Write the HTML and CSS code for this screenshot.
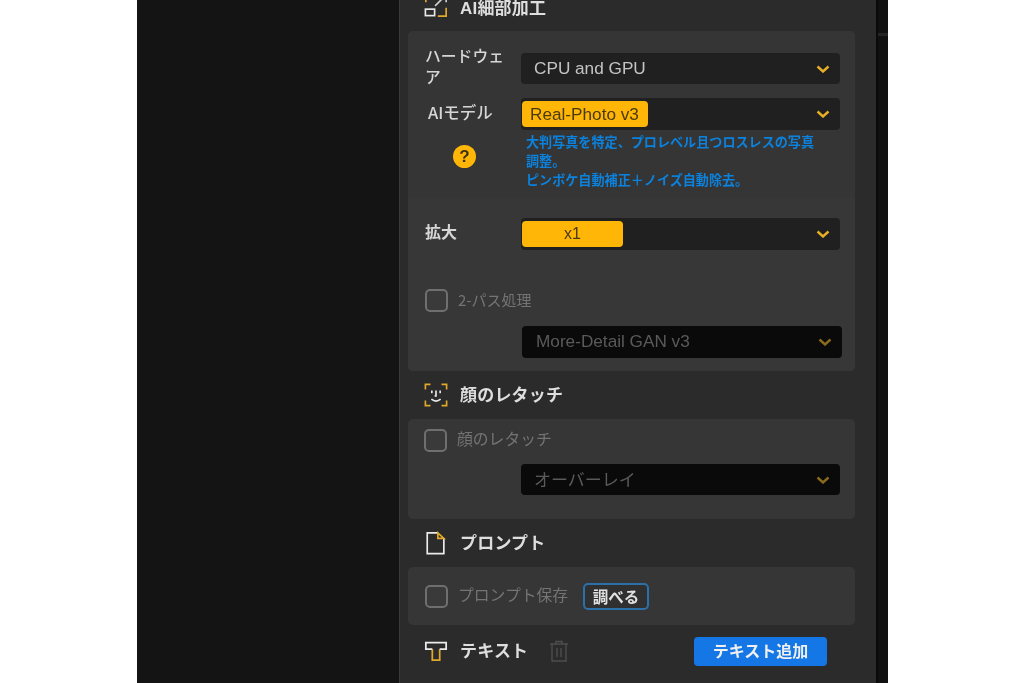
FILE: index.html
```html
<!DOCTYPE html>
<html lang="ja">
<head>
<meta charset="utf-8">
<title>AI細部加工</title>
<link rel="stylesheet" href="styles.css">
</head>
<body>
<div class="app">
  <div class="side"></div>
  <main class="panel">
    <header class="head head-first">
      <svg class="ico" viewBox="0 0 26 26" fill="none" stroke-width="1.8"><path d="M2 1v9" stroke="#e0a92a"/><path d="M24 16v9h-9" stroke="#e0a92a"/><rect x="1.5" y="17.500" width="10" height="7" stroke="#e8e8e8"/><path d="M12 14 23 3M16 2h8v8" stroke="#cfcfcf"/></svg>
      <span class="head-text">AI細部加工</span>
    </header>
    <section class="card card-main">
      <div class="block block-a">
        <div class="row row-first">
          <div class="label">ハードウェア</div>
          <div class="select"><span class="val">CPU and GPU</span><svg class="chev" viewBox="0 0 14 8"><path d="M1.500 1.500 7 6.500l5.500-5"/></svg></div>
        </div>
        <div class="row row-model">
          <div class="label label-c">AIモデル</div>
          <div class="select select-chip"><span class="chip chip-model">Real-Photo v3</span><svg class="chev" viewBox="0 0 14 8"><path d="M1.500 1.500 7 6.500l5.500-5"/></svg></div>
        </div>
        <div class="row row-help">
          <div class="help-cell"><span class="help">?</span></div>
          <p class="note">大判写真を特定、プロレベル且つロスレスの写真調整。<br>ピンボケ自動補正＋ノイズ自動除去。</p>
        </div>
      </div>
      <div class="block block-b">
        <div class="row">
          <div class="label label-scale">拡大</div>
          <div class="select select-chip"><span class="chip chip-scale">x1</span><svg class="chev" viewBox="0 0 14 8"><path d="M1.500 1.500 7 6.500l5.500-5"/></svg></div>
        </div>
        <label class="check check-pass"><span class="box"></span><span class="check-text small">2-パス処理</span></label>
        <div class="row row-dark">
          <div></div>
          <div class="select select-off wide"><span class="val val-detail">More-Detail GAN v3</span><svg class="chev" viewBox="0 0 14 8"><path d="M1.500 1.500 7 6.500l5.500-5"/></svg></div>
        </div>
      </div>
    </section>
    <header class="head head-face">
      <svg class="ico" viewBox="0 0 26 26" fill="none" stroke-width="1.8"><path d="M1.500 7V1.500H7M19 1.500h5.500V7M1.500 19v5.500H7M19 24.500h5.500V19" stroke="#e0a92a"/><path d="M8.500 8v3M17.500 8v3M13 8v6h-1.500M8 17.500c3 2.500 7 2.500 10 0" stroke="#e8e8e8"/></svg>
      <span class="head-text">顔のレタッチ</span>
    </header>
    <section class="card card-face">
      <label class="check"><span class="box"></span><span class="check-text">顔のレタッチ</span></label>
      <div class="row row-over">
        <div></div>
        <div class="select select-off"><span class="val val-jp">オーバーレイ</span><svg class="chev" viewBox="0 0 14 8"><path d="M1.500 1.500 7 6.500l5.500-5"/></svg></div>
      </div>
    </section>
    <header class="head head-prompt">
      <svg class="ico" viewBox="0 0 26 26" fill="none" stroke-width="1.8"><path d="M15 2H3.500v22.500h18V8" stroke="#ececec"/><path d="M15 2v6h6.500z" stroke="#e0a92a"/></svg>
      <span class="head-text">プロンプト</span>
    </header>
    <section class="card card-prompt">
      <label class="check"><span class="box"></span><span class="check-text">プロンプト保存</span></label>
      <button class="btn-outline">調べる</button>
    </section>
    <header class="head head-text-row">
      <svg class="ico" viewBox="0 0 26 26" fill="none" stroke-width="1.900"><path d="M9 11v12h8V11" stroke="#e0a92a"/><path d="M9 11H2V4h22v7h-7" stroke="#ececec"/></svg>
      <span class="head-text">テキスト</span>
      <svg class="trash" viewBox="0 0 20 22" fill="none" stroke="#4e4e4e" stroke-width="1.400"><path d="M1 4h18M7 4V1.500h6V4M3 4v17h14V4M8 8v9M12 8v9"/></svg>
      <button class="btn-blue">テキスト追加</button>
    </header>
  </main>
  <div class="edge"></div>
</div>
</body>
</html>
```
FILE: styles.css
```css
* { box-sizing: border-box; }
html, body { margin: 0; height: 100%; background: #fff; overflow: hidden; }
body { font-family: "Liberation Sans", "Noto Sans CJK JP", sans-serif; }
.app { display: flex; width: 751px; height: 683px; margin-left: 137px; background: #131313; filter: blur(0.6px); overflow: hidden; }
.side { width: 263px; flex: none; background: #141414; border-right: 1px solid #3a3a3a; }
.panel { width: 476px; flex: none; background: #2b2b2b; padding: 0 21px 0 8px; height: 683px; overflow: hidden; }
.edge { flex: 1; background: linear-gradient(#101010 33px, #242424 33px, #242424 36px, #101010 36px); border-left: 2px solid #0a0a0a; }

.head { display: flex; align-items: center; height: 26px; padding-left: 16px; }
.head-first { margin-top: -5px; margin-bottom: 10px; }
.head-first .ico { margin-bottom: 6px; }
.head-face { margin-top: 11px; }
.head-prompt { margin-top: 11px; }
.head-text-row { margin-top: 13px; position: relative; }
.ico { width: 24px; height: 24px; flex: none; }
.head-text { margin: 0 0 4px 12px; font-size: 17px; font-weight: 700; color: #dedede; letter-spacing: .2px; white-space: nowrap; }

.card { background: #363636; border-radius: 5px; }
.block-a { background: #353535; height: 167px; padding-top: 22px; border-radius: 5px 5px 0 0; }
.block-b { background: #373737; height: 173px; padding-top: 20px; border-radius: 0 0 5px 5px; }
.row { display: grid; grid-template-columns: 96px 319px; padding-left: 17px; }
.row-first { height: 31px; }
.row-model { margin-top: 14px; }
.row-dark { margin-top: 14px; grid-template-columns: 97px 320px; }
.row-over { margin-top: 12px; }
.label { font-size: 15.800px; line-height: 21px; color: #d6d6d6; font-weight: 500; width: 90px; margin-top: -8px; font-family: "Noto Sans CJK JP", sans-serif; }
.label-c { padding-left: 3px; font-size: 16.500px; white-space: nowrap; margin-top: 4px; }
.label-scale { font-weight: 700; font-size: 16px; margin-top: 3px; }

.select { display: flex; align-items: center; justify-content: space-between; height: 31px; background: #202020; border-radius: 4px; padding: 0 10px 0 13px; }
.select-chip { padding-left: 1px; height: 32px; }
.val { font-size: 17.200px; color: #c4c4c4; white-space: nowrap; }
.chev { width: 14px; height: 8px; fill: none; stroke: #e8ae27; stroke-width: 2.400; flex: none; }
.chip { display: block; height: 26px; line-height: 26px; background: #ffb606; color: #4a3a10; border-radius: 4px; font-size: 17.200px; white-space: nowrap; }
.chip-model { width: 126px; padding-left: 8px; }
.chip-scale { width: 101px; text-align: center; font-size: 16px; }

.help-cell { display: flex; justify-content: center; padding: 15px 17px 0 0; }
.help { display: block; width: 23px; height: 23px; border-radius: 50%; background: #ffb606; color: #3f3210; font-size: 17px; font-weight: 700; line-height: 23px; text-align: center; }
.note { margin: 2px 0 0 5px; width: 296px; font-size: 13.100px; line-height: 19px; font-weight: 700; color: #0b82dd; font-family: "Noto Sans CJK JP", sans-serif; }

.check { display: flex; height: 23px; padding-left: 17px; }
.check-pass { margin-top: 39px; }
.box { width: 23px; height: 23px; flex: none; border: 2px solid #6f6f6f; border-radius: 5px; background: #3a3a3a; }
.check-text { margin-left: 10px; line-height: 20px; font-size: 15.800px; color: #747474; white-space: nowrap; font-family: "Noto Sans CJK JP", sans-serif; }
.small { font-size: 15px; margin-top: 1px; }

.select-off { background: #0a0a0a; }
.select-off .val { color: #5a5a5a; }
.select-off .chev { stroke: #8a6a1c; }
.wide { height: 32px; padding-left: 14px; }
.val-detail { margin-bottom: 1px; }
.val-jp { font-size: 17px; margin-bottom: 3px; font-family: "Noto Sans CJK JP", sans-serif; }

.card-face { height: 100px; padding-top: 10px; margin-top: 11px; }
.card-face .check { padding-left: 16px; }
.card-prompt { height: 58px; display: flex; align-items: center; margin-top: 11px; padding-top: 1px; }
.btn-outline { margin-left: 15px; width: 66px; height: 27px; padding: 0 0 3px; background: #303030; border: 2px solid #2b70a9; border-radius: 5px; color: #e2e2e2; font: 700 15.500px "Noto Sans CJK JP", sans-serif; }
.trash { width: 20px; height: 22px; margin-left: 21px; flex: none; }
.btn-blue { position: absolute; left: 286px; top: -1px; width: 133px; height: 29px; padding: 0 0 3px; border: 0; border-radius: 4px; background: #1577e5; color: #f0f0f0; font: 700 16px "Noto Sans CJK JP", sans-serif; }
```
